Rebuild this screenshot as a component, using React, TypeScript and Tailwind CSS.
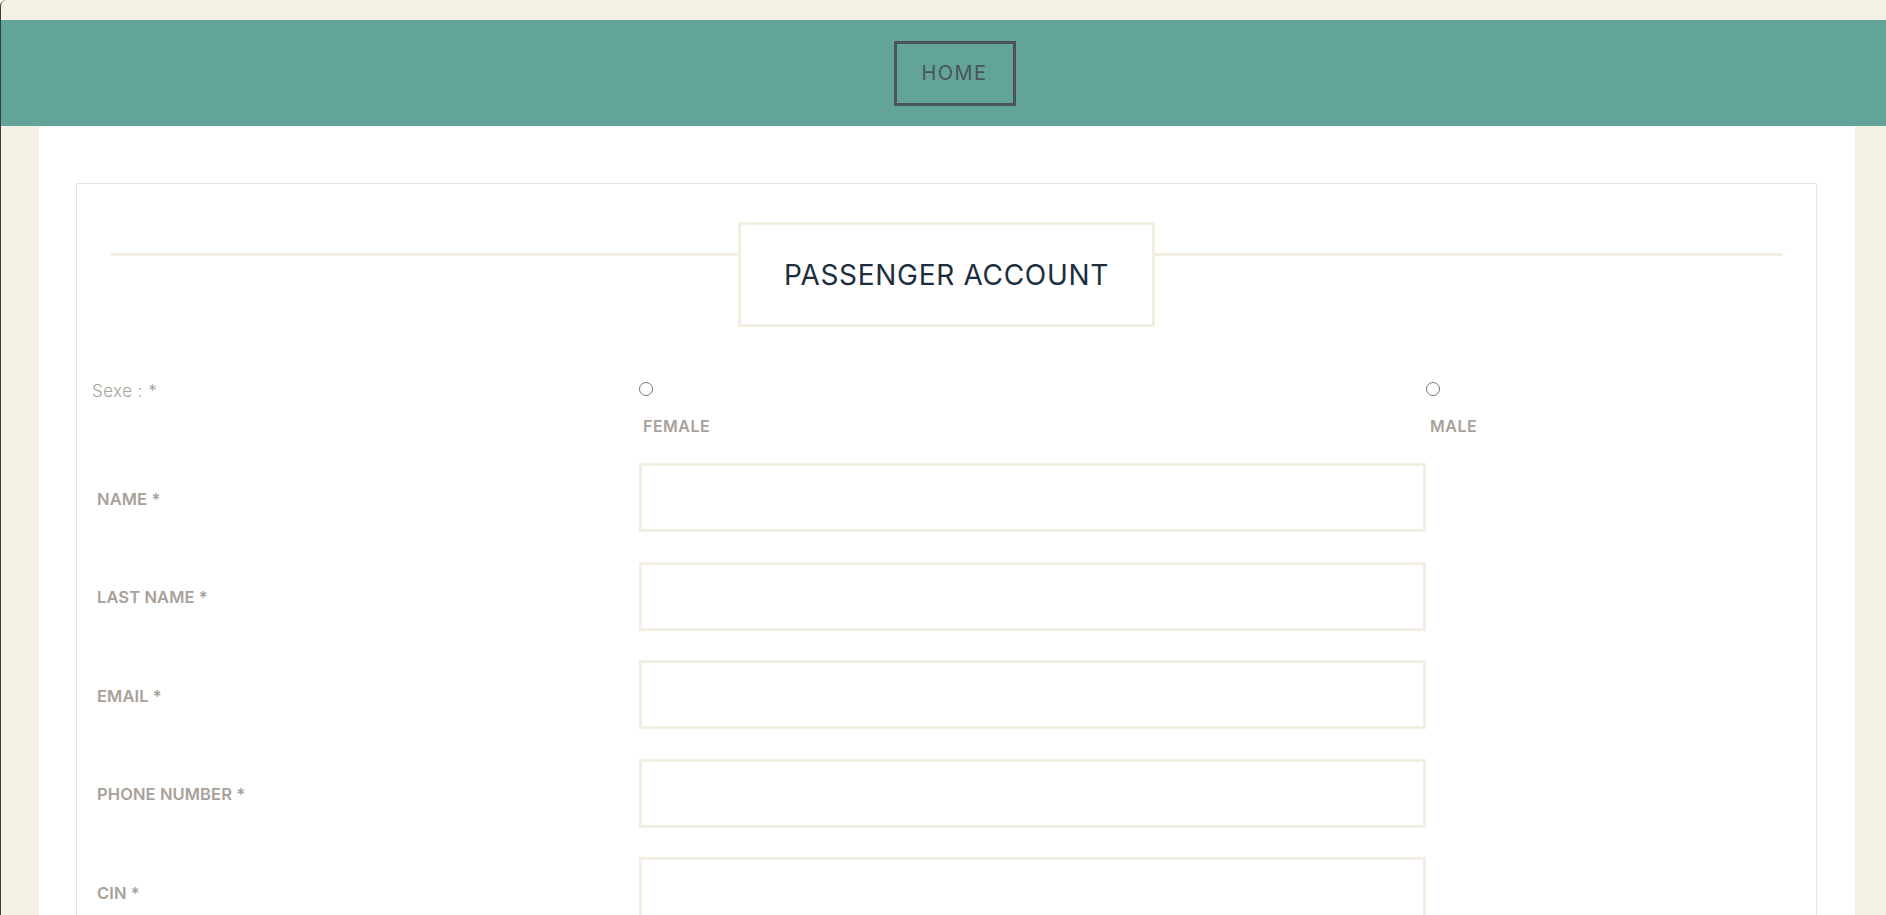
const fields = ["NAME *", "LAST NAME *", "EMAIL *", "PHONE NUMBER *", "CIN *"];

function Radio({ label }: { label: string }) {
  return (
    <label className="flex flex-col items-start">
      <input
        type="radio"
        name="sexe"
        className="mt-[3px] h-[14px] w-[14px] appearance-none rounded-full border border-[#767676] bg-white"
      />
      <span className="ml-[4px] mt-[20px] text-[16px] font-semibold leading-[20px] tracking-[0.5px] text-[#a8a199]">
        {label}
      </span>
    </label>
  );
}

export default function App() {
  return (
    <div
      className="min-h-screen rounded-tl-[6px] border-l border-[#3c3c3c] bg-[#f4f0e3] pt-[20px]"
      style={{ fontFamily: "Inter, 'Noto Sans', sans-serif" }}
    >
      {/* Header */}
      <header className="flex h-[106px] items-center justify-center bg-[#63a499] pl-[22px]">
        <a
          href="#"
          className="flex h-[65px] w-[122px] items-center justify-center border-[3px] border-[#4a5459] text-[20px] tracking-[1.5px] text-[#4a5459]"
        >
          HOME
        </a>
      </header>

      {/* Content */}
      <main className="ml-[38px] mr-[31px] bg-white pb-[40px] pl-[37px] pr-[38px] pt-[57px]">
        <div className="border border-[#e3e3e3] pb-[40px] pt-[38px]">
          <div className="relative">
            <div className="absolute left-[33px] right-[34px] top-[31px] h-[3px] bg-[#f3efe0]"></div>
            <div className="relative mx-auto flex h-[105px] w-[417px] items-center justify-center border-[3px] border-[#f3efe0] bg-white">
              <h1 className="text-[28px] font-normal tracking-[0.7px] text-[#1d2e3e]">PASSENGER ACCOUNT</h1>
            </div>
          </div>

          {/* Sexe */}
          <div className="mt-[52px] flex items-start">
            <div className="w-[562px] pl-[15px] text-[17px] font-light leading-[24px] tracking-[0.45px] text-[#aaa299]">
              Sexe : *
            </div>
            <div className="w-[787px]">
              <Radio label="FEMALE" />
            </div>
            <div>
              <Radio label="MALE" />
            </div>
          </div>

          {/* Fields */}
          <div className="mt-[27px] flex flex-col gap-[29.5px]">
            {fields.map((f) => (
              <div key={f} className="flex items-center">
                <label className="w-[562px] pl-[20px] pt-[3px] text-[16.5px] font-semibold tracking-[0.1px] text-[#a8a199]">
                  {f}
                </label>
                <input
                  type="text"
                  className="h-[69px] w-[787px] border-[3px] border-[#f3efe0] bg-white px-3 outline-none"
                />
              </div>
            ))}
          </div>
        </div>
      </main>
    </div>
  );
}
